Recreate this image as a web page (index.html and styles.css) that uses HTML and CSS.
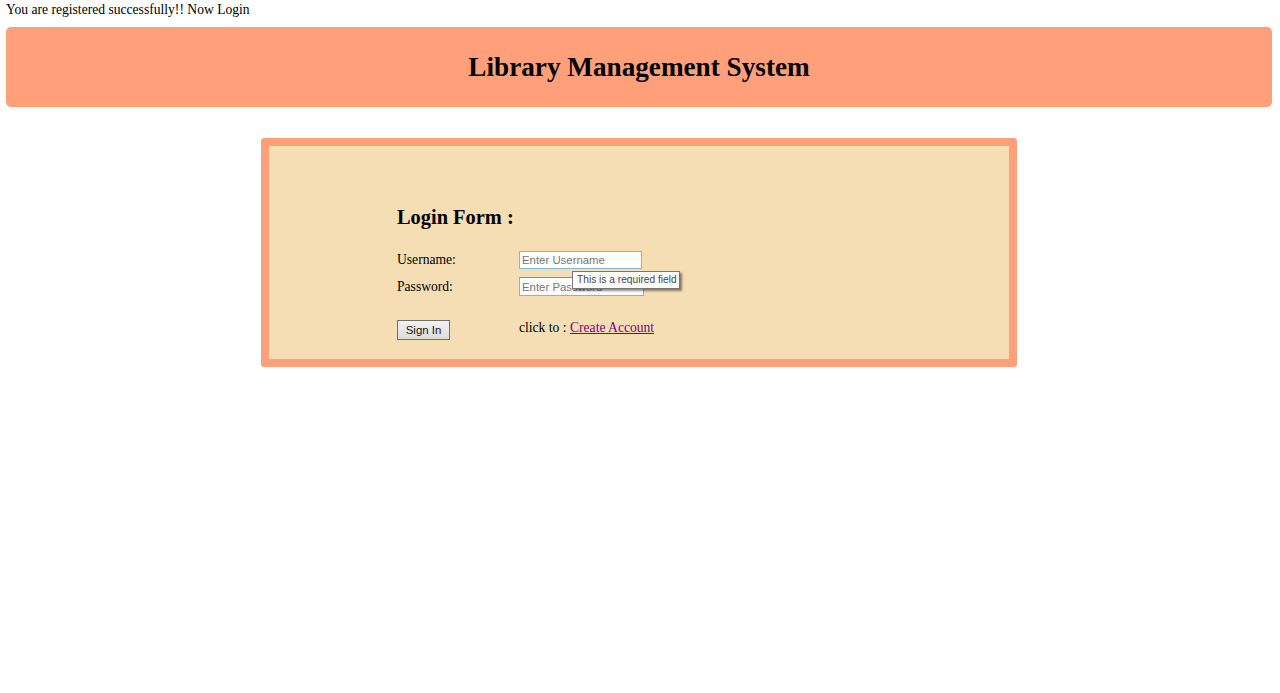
FILE: index.html
```html
<!DOCTYPE html>
<html>
<head>
<meta charset="utf-8">
<title>Library Management System</title>
<link rel="stylesheet" href="styles.css">
</head>
<body>
<div class="msg">You are registered successfully!! Now Login</div>
<div class="header"><h1>Library Management System</h1></div>
<div class="box">
  <div class="inner">
    <h2>Login Form :</h2>
    <div class="row">
      <span class="label">Username:</span>
      <input class="field focus" type="text" placeholder="Enter Username">
    </div>
    <div class="row">
      <span class="label">Password:</span>
      <input class="field" type="password" placeholder="Enter Password">
    </div>
    <div class="row last">
      <span class="label"><button class="btn">Sign In</button></span>
      <span class="click">click to : <a href="#" class="link">Create Account</a></span>
    </div>
    <div class="tip">This is a required field</div>
  </div>
</div>
</body>
</html>
```
FILE: styles.css
```css
html, body {
  margin: 0;
  padding: 0;
  background: #fff;
}
body {
  padding: 2px 8px 0 6px;
  font-family: "Liberation Serif", "Times New Roman", serif;
  font-size: 13.6px;
  color: #000;
}
.msg {
  line-height: 16px;
  height: 16px;
}
.header {
  margin-top: 9px;
  height: 80px;
  background: #ffa07a;
  border-radius: 5px;
  display: flex;
  align-items: center;
  justify-content: center;
}
.header h1 {
  margin: 0;
  font-size: 27.2px;
  font-weight: bold;
  line-height: 32px;
}
.box {
  margin: 31px auto 0 auto;
  width: 740px;
  border: 8px solid #ffa07a;
  border-radius: 3px;
  background: #f5deb3;
}
.inner {
  position: relative;
  height: 213px;
  padding-left: 128px;
  box-sizing: border-box;
  padding-top: 59px;
}
h2 {
  margin: 0 0 17px 0;
  font-size: 20.4px;
  line-height: 24px;
  font-weight: bold;
}
.row {
  display: flex;
  align-items: center;
  height: 27px;
}
.row.last {
  margin-top: 18px;
  height: 24px;
}
.label {
  width: 122px;
  flex: none;
}
.field {
  box-sizing: border-box;
  width: 125px;
  height: 19px;
  margin: 0;
  padding: 1px 2px;
  font-family: "Liberation Sans", Arial, sans-serif;
  font-size: 11.4px;
  background: #fff;
  border: 1px solid #a9a9a9;
  border-top-color: #8a8a8a;
  outline: none;
}
.field::placeholder {
  color: #767676;
}
.field.focus {
  border-color: #7fb8d8;
  height: 18px;
  width: 123px;
}
.btn {
  box-sizing: border-box;
  width: 53px;
  height: 20px;
  margin: 0;
  padding: 0;
  font-family: "Liberation Sans", Arial, sans-serif;
  font-size: 11.4px;
  color: #111;
  background: linear-gradient(#f2f2f2, #dcdcdc);
  border: 1px solid #707070;
  border-radius: 0;
}
.click {
  position: relative;
  top: -2px;
}
.link {
  color: #800080;
  text-decoration: underline;
}
.tip {
  position: absolute;
  left: 303px;
  top: 125px;
  box-sizing: border-box;
  width: 108px;
  height: 18px;
  padding: 0 4px;
  font-family: "Liberation Sans", Arial, sans-serif;
  font-size: 10.2px;
  line-height: 16px;
  color: #444;
  background: #fff;
  border: 1px solid #767676;
  box-shadow: 2px 2px 2px rgba(0, 0, 0, 0.45);
  white-space: nowrap;
}
```
